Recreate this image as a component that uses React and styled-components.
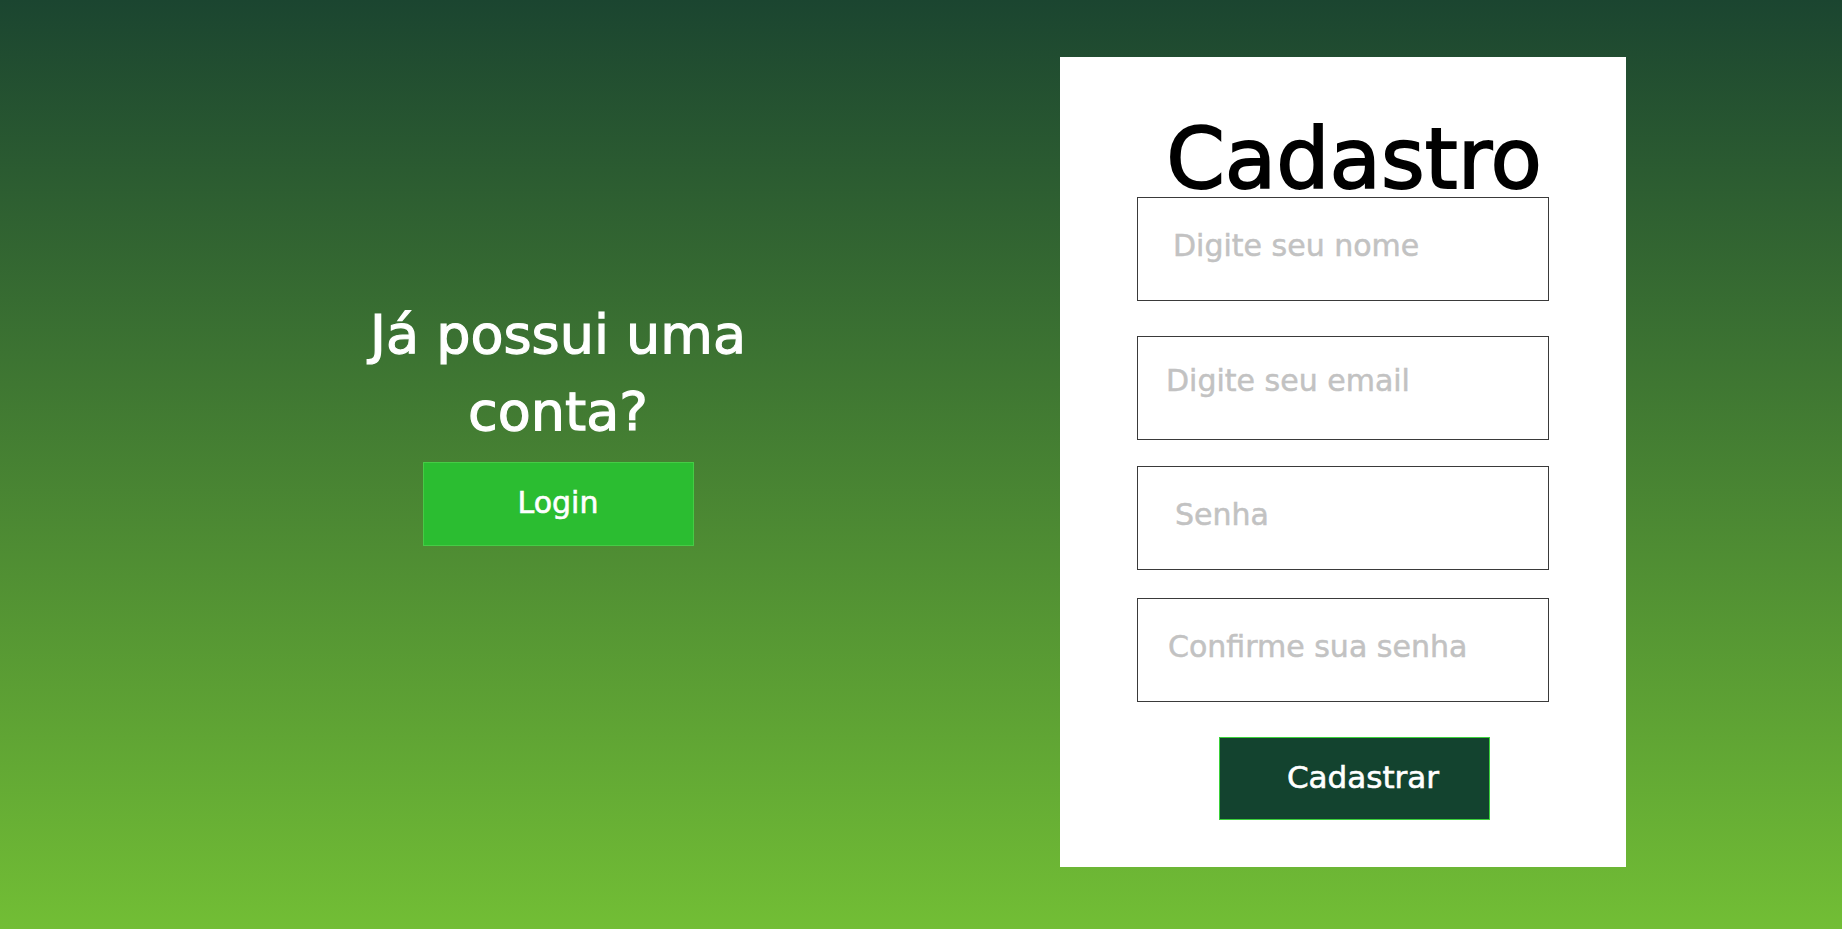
import React from 'react';
import styled, { createGlobalStyle } from 'styled-components';

const COLORS = {
  top: '#1b4530',
  bottom: '#72be35',
  white: '#ffffff',
  login: '#2bbd31',
  loginBorder: '#45cc45',
  submit: '#13432f',
  submitBorder: '#3bd03b',
  placeholder: '#c2c2c2',
  inputBorder: '#3a3a3a',
};

const GlobalStyle = createGlobalStyle`
  * { box-sizing: border-box; }
  html, body {
    margin: 0;
    padding: 0;
    font-family: "DejaVu Sans", "Open Sans", sans-serif;
  }
`;

const Page = styled.main`
  width: 100%;
  height: 929px;
  background: linear-gradient(180deg, ${COLORS.top} 0%, ${COLORS.bottom} 100%);
  display: flex;
  align-items: flex-start;
  overflow: hidden;
`;

const Side = styled.section`
  width: 1060px;
  padding: 296px 0 0 56px;
  display: flex;
  flex-direction: column;
  align-items: center;
`;

const Question = styled.h2`
  margin: 0;
  width: 460px;
  text-align: center;
  font-size: 54px;
  font-weight: 400;
  line-height: 77px;
  color: ${COLORS.white};
  -webkit-text-stroke: 1.2px ${COLORS.white};
`;

const LoginButton = styled.button`
  margin-top: 12px;
  width: 271px;
  height: 84px;
  padding: 0 0 4px;
  background: ${COLORS.login};
  border: 1px solid ${COLORS.loginBorder};
  color: ${COLORS.white};
  font-family: inherit;
  font-size: 30px;
  -webkit-text-stroke: 0.6px ${COLORS.white};
  cursor: pointer;
`;

const Card = styled.form`
  margin-top: 57px;
  width: 566px;
  height: 810px;
  background: ${COLORS.white};
  padding-top: 63px;
  display: flex;
  flex-direction: column;
  align-items: center;
`;

const Title = styled.h1`
  margin: 0 0 -1px 22px;
  font-size: 84px;
  font-weight: 400;
  line-height: 78px;
  color: #000;
  -webkit-text-stroke: 1.8px #000;
`;

const Field = styled.input`
  margin-top: ${p => p.$gap}px;
  width: 412px;
  height: 104px;
  border: 1px solid ${COLORS.inputBorder};
  padding: 0 10px ${p => p.$lift}px ${p => p.$indent}px;
  font-family: inherit;
  font-size: 30px;
  background: ${COLORS.white};
  outline: none;
  &::placeholder {
    color: ${COLORS.placeholder};
    -webkit-text-stroke: 0.5px ${COLORS.placeholder};
  }
`;

const SubmitButton = styled.button`
  margin: 35px 0 0 23px;
  width: 271px;
  height: 83px;
  padding: 0 0 4px 17px;
  background: ${COLORS.submit};
  border: 1px solid ${COLORS.submitBorder};
  color: ${COLORS.white};
  font-family: inherit;
  font-size: 31px;
  -webkit-text-stroke: 0.6px ${COLORS.white};
  cursor: pointer;
`;

const fields = [
  { placeholder: 'Digite seu nome', type: 'text', gap: 0, indent: 35, lift: 7 },
  { placeholder: 'Digite seu email', type: 'email', gap: 35, indent: 28, lift: 16 },
  { placeholder: 'Senha', type: 'password', gap: 26, indent: 37, lift: 7 },
  { placeholder: 'Confirme sua senha', type: 'password', gap: 28, indent: 30, lift: 7 },
];

const App = () => (
  <>
    <GlobalStyle />
    <Page>
      <Side>
        <Question>Já possui uma conta?</Question>
        <LoginButton type="button">Login</LoginButton>
      </Side>
      <Card onSubmit={e => e.preventDefault()}>
        <Title>Cadastro</Title>
        {fields.map(f => (
          <Field
            key={f.placeholder}
            type={f.type}
            placeholder={f.placeholder}
            $gap={f.gap}
            $indent={f.indent}
            $lift={f.lift}
          />
        ))}
        <SubmitButton type="submit">Cadastrar</SubmitButton>
      </Card>
    </Page>
  </>
);

export default App;
